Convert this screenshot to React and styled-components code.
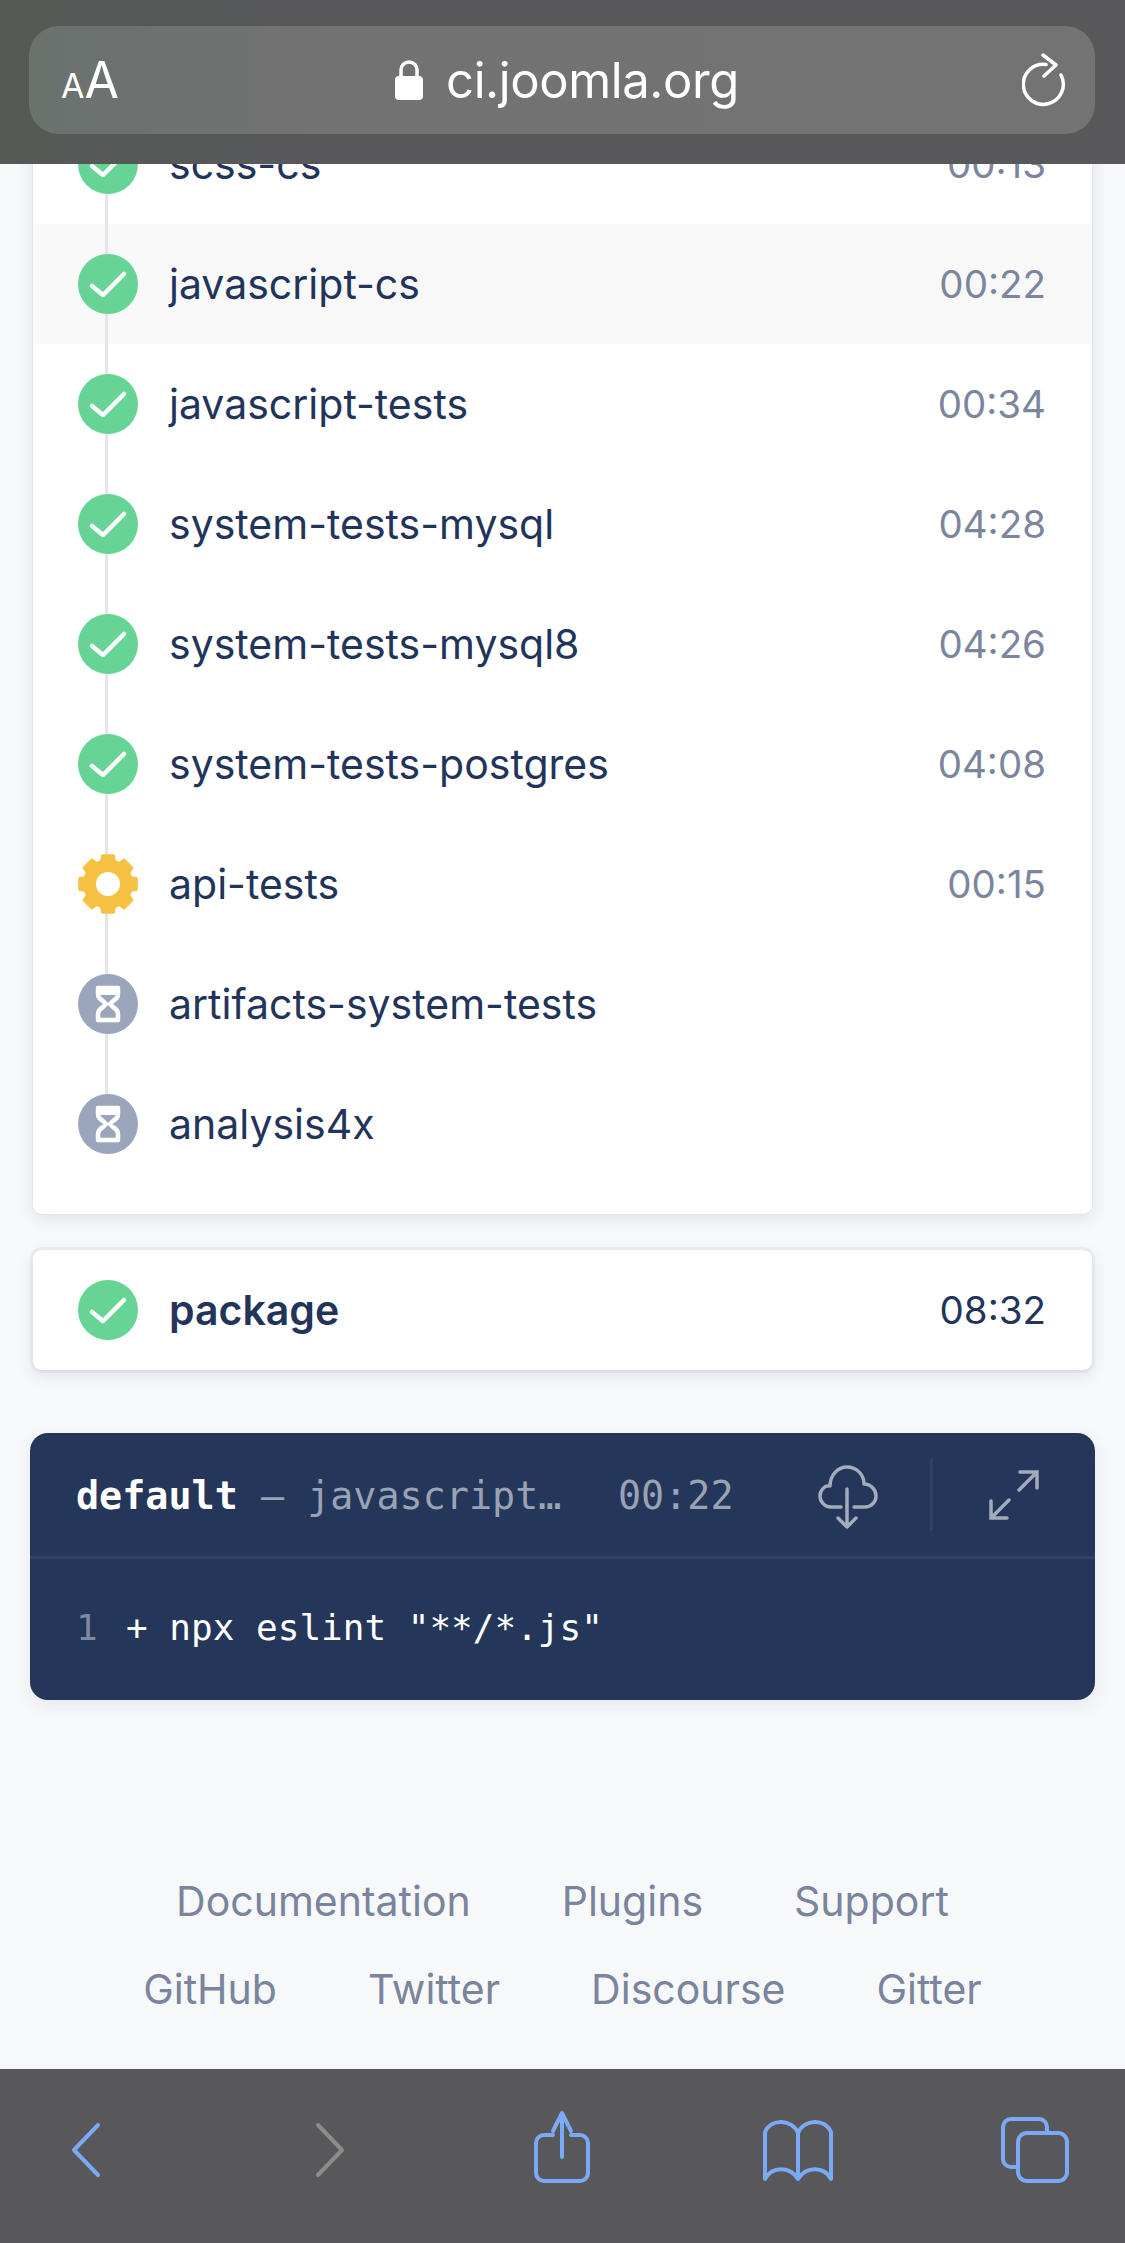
import React from 'react'
import styled, { createGlobalStyle } from 'styled-components'

const GlobalStyle = createGlobalStyle`
  html, body { margin: 0; padding: 0; background: #f6f8fa; }
  body { font-family: Inter, "Noto Sans", sans-serif; }
`

const jobs = [
  { name: 'scss-cs', time: '00:13', status: 'success' },
  { name: 'javascript-cs', time: '00:22', status: 'success', active: true },
  { name: 'javascript-tests', time: '00:34', status: 'success' },
  { name: 'system-tests-mysql', time: '04:28', status: 'success' },
  { name: 'system-tests-mysql8', time: '04:26', status: 'success' },
  { name: 'system-tests-postgres', time: '04:08', status: 'success' },
  { name: 'api-tests', time: '00:15', status: 'running' },
  { name: 'artifacts-system-tests', status: 'pending' },
  { name: 'analysis4x', status: 'pending' },
]

const footerLinks = ['Documentation', 'Plugins', 'Support', 'GitHub', 'Twitter', 'Discourse', 'Gitter']

// 8 tooth gear, centre 30,30
const gearPath = () => {
  const pts = []
  for (let i = 0; i < 8; i++) {
    const a = (i * Math.PI) / 4 - Math.PI / 2
    const p = (r, d) => {
      const t = a + d
      return `${(30 + r * Math.cos(t)).toFixed(2)} ${(30 + r * Math.sin(t)).toFixed(2)}`
    }
    pts.push(p(25, -0.32), p(30.5, -0.22), p(30.5, 0.22), p(25, 0.32))
  }
  return 'M' + pts.join('L') + 'Z'
}

const StatusIcon = ({ status }) => {
  if (status === 'running') {
    return (
      <IconBox viewBox="0 0 60 60">
        <path d={gearPath()} fill="#f6c042" />
        <circle cx="30" cy="30" r="12" fill="#fff" />
      </IconBox>
    )
  }
  if (status === 'pending') {
    return (
      <IconBox viewBox="0 0 60 60">
        <circle cx="30" cy="30" r="30" fill="#9ba6bd" />
        <path d="M20 14H40V20Q40 24 35 27L32 30L35 33Q40 36 40 40V46H20V40Q20 36 25 33L28 30L25 27Q20 24 20 20Z" fill="none" stroke="#fff" strokeWidth="4.5" strokeLinejoin="round" />
        <path d="M21 15H39V21H21Z" fill="#fff" />
      </IconBox>
    )
  }
  return (
    <IconBox viewBox="0 0 60 60">
      <circle cx="30" cy="30" r="30" fill="#65d495" />
      <path d="M14 32L25 41L46 20" fill="none" stroke="#fff" strokeWidth="4.5" strokeLinecap="round" strokeLinejoin="round" />
    </IconBox>
  )
}

const App = () => (
  <Page>
    <GlobalStyle />

    <TopBar>
      <AddressBar>
        <TextSize><small>A</small>A</TextSize>
        <Url>
          <svg width="28" height="40" viewBox="0 0 28 40">
            <path d="M6 18V10a8 8 0 0 1 16 0v8" fill="none" stroke="#fff" strokeWidth="3.5" />
            <rect x="0" y="16" width="28" height="24" rx="4" fill="#fff" />
          </svg>
          ci.joomla.org
        </Url>
        <Reload>
          <svg width="44" height="54" viewBox="0 0 44 54" fill="none" stroke="#fff" strokeWidth="3.5" strokeLinecap="round" strokeLinejoin="round">
            <path d="M39 22A20 20 0 1 1 24 11.5" />
            <path d="M21 2L34 12L22 23" />
          </svg>
        </Reload>
      </AddressBar>
    </TopBar>

    <Card>
      {jobs.map((job, i) => (
        <Row key={job.name} $active={job.active} $last={i === jobs.length - 1}>
          <StatusIcon status={job.status} />
          <JobName>{job.name}</JobName>
          {job.time && <JobTime>{job.time}</JobTime>}
        </Row>
      ))}
      <CardEnd />
    </Card>

    <StageCard>
      <StatusIcon status="success" />
      <StageName>package</StageName>
      <StageTime>08:32</StageTime>
    </StageCard>

    <LogPanel>
      <LogHeader>
        <LogTitle><b>default</b> <span>— javascript…</span></LogTitle>
        <LogTime>00:22</LogTime>
        <LogAction>
          <svg width="60" height="64" viewBox="0 0 60 64" fill="none" stroke="#a3abbd" strokeWidth="3.5" strokeLinecap="round" strokeLinejoin="round">
            <path d="M23 42H13C6 42 2 36 2 31C2 25 7 20 12 21C12 10 20 2 29 2C39 2 46 10 46 19C53 19 58 25 58 31C58 37 53 42 47 42H36" />
            <path d="M29 24V62M20 53L29 62L38 53" />
          </svg>
        </LogAction>
        <LogExpand>
          <svg width="52" height="52" viewBox="0 0 52 52" fill="none" stroke="#a3abbd" strokeWidth="3.5" strokeLinecap="round">
            <path d="M32 3H49V19M49 3L31 21M3 32V49H19M3 49L21 31" />
          </svg>
        </LogExpand>
      </LogHeader>
      <LogBody>
        <LineNumber>1</LineNumber>
        <LogLine>+ npx eslint "**/*.js"</LogLine>
      </LogBody>
    </LogPanel>

    <Footer>
      {footerLinks.map(l => <FooterLink key={l}>{l}</FooterLink>)}
    </Footer>

    <BottomBar>
      <svg viewBox="0 0 72 80" stroke="#7aa9f5">
        <path d="M48 15L24 40L48 65" />
      </svg>
      <svg viewBox="0 0 72 80" stroke="#8c8c8c">
        <path d="M24 15L48 40L24 65" />
      </svg>
      <svg viewBox="0 0 72 80" stroke="#7aa9f5">
        <path d="M27 25H18a8 8 0 0 0-8 8V63a8 8 0 0 0 8 8H54a8 8 0 0 0 8-8V33a8 8 0 0 0-8-8H45" />
        <path d="M36 47V4M27 21L36 3L45 21" />
      </svg>
      <svg viewBox="0 0 72 80" stroke="#7aa9f5">
        <path d="M36 23C30 9 9 8 3 22V69C10 56 28 56 36 69C44 56 62 56 69 69V22C63 8 42 9 36 23V69" />
      </svg>
      <svg viewBox="0 0 72 80" stroke="#7aa9f5">
        <path d="M17 57H12a8 8 0 0 1-8-8V17a8 8 0 0 1 8-8H40a8 8 0 0 1 8 8V22" />
        <rect x="19" y="23" width="49" height="48" rx="9" />
      </svg>
    </BottomBar>
  </Page>
)

const Page = styled.div`
  position: relative;
  height: 2243px;
  overflow: hidden;
  padding-top: 104px;
  box-sizing: border-box;
  background: #f6f8fa;
`

const TopBar = styled.div`
  position: absolute;
  top: 0;
  left: 0;
  right: 0;
  height: 164px;
  z-index: 2;
  padding: 26px 30px 0 29px;
  box-sizing: border-box;
  background: linear-gradient(90deg, #545a56 0%, #58585a 25%, #58585a 100%);
`

const AddressBar = styled.div`
  display: grid;
  grid-template-columns: 1fr auto 1fr;
  align-items: center;
  height: 108px;
  padding: 0 29px 0 32px;
  border-radius: 30px;
  background: linear-gradient(90deg, #6a726e 0%, #727272 25%, #737373 100%);
  color: #fff;
`

const TextSize = styled.div`
  font-size: 50px;
  small { font-size: 34px; }
`

const Url = styled.div`
  display: flex;
  align-items: center;
  gap: 23px;
  padding-left: 7px;
  font-size: 49px;
  letter-spacing: -0.4px;
`

const Reload = styled.div`
  justify-self: end;
  height: 54px;
`

const Card = styled.div`
  margin: 0 33px;
  background: #fff;
  border-radius: 0 0 9px 9px;
  box-shadow: 0 0 0 1px rgba(60, 70, 100, 0.04), 0 5px 16px rgba(60, 70, 100, 0.12);
`

const Row = styled.div`
  position: relative;
  display: flex;
  align-items: center;
  height: 120px;
  padding: 0 46px 0 45px;
  background: ${p => (p.$active ? '#f8f8f9' : 'transparent')};
  &::before {
    content: '';
    position: absolute;
    left: 72px;
    width: 3px;
    top: 0;
    bottom: ${p => (p.$last ? '60px' : '0')};
    background: #e3e5eb;
  }
`

const CardEnd = styled.div`
  height: 30px;
`

const IconBox = styled.svg`
  position: relative;
  flex: none;
  width: 60px;
  height: 60px;
`

const JobName = styled.div`
  flex: 1;
  margin-left: 31px;
  font-size: 41px;
  color: #22345a;
`

const JobTime = styled.div`
  font-size: 38.5px;
  color: #7b869e;
`

const StageCard = styled.div`
  display: flex;
  align-items: center;
  height: 120px;
  margin: 36px 33px 0;
  padding: 0 46px 0 45px;
  background: #fff;
  border-radius: 9px;
  box-shadow: 0 0 0 3px rgba(60, 70, 100, 0.05), 0 5px 16px rgba(60, 70, 100, 0.12);
`

const StageName = styled.div`
  flex: 1;
  margin-left: 31px;
  font-size: 41px;
  font-weight: 600;
  color: #22345a;
`

const StageTime = styled.div`
  font-size: 38.5px;
  color: #22345a;
`

const LogPanel = styled.div`
  margin: 63px 30px 0;
  height: 267px;
  border-radius: 18px;
  background: #243659;
  font-family: "DejaVu Sans Mono", monospace;
  box-shadow: 0 6px 20px rgba(60, 70, 100, 0.08);
`

const LogHeader = styled.div`
  display: flex;
  align-items: center;
  height: 123px;
  padding-left: 46px;
  border-bottom: 3px solid #2f4165;
`

const LogTitle = styled.div`
  width: 499px;
  padding-top: 2px;
  white-space: nowrap;
  font-size: 38.4px;
  color: #9aa3b5;
  b { color: #fff; font-weight: 700; }
`

const LogTime = styled.div`
  margin-left: 43px;
  padding-top: 2px;
  font-size: 38.4px;
  color: #9aa3b5;
`

const LogAction = styled.div`
  display: flex;
  margin-left: 84px;
  padding-top: 4px;
`

const LogExpand = styled.div`
  display: flex;
  align-items: center;
  height: 72px;
  margin-left: 52px;
  padding-left: 55px;
  border-left: 3px solid #2f4165;
`

const LogBody = styled.div`
  display: flex;
  align-items: center;
  height: 136px;
  padding-left: 46px;
  font-size: 36px;
  white-space: pre;
`

const LineNumber = styled.span`
  width: 50px;
  color: #7f899d;
`

const LogLine = styled.span`
  color: #fff;
`

const Footer = styled.div`
  display: flex;
  flex-wrap: wrap;
  justify-content: center;
  column-gap: 91px;
  margin-top: 157px;
  padding: 0 90px;
`

const FooterLink = styled.a`
  line-height: 88px;
  font-size: 41px;
  color: #7a859d;
`

const BottomBar = styled.div`
  position: absolute;
  left: 0;
  right: 0;
  bottom: 0;
  height: 174px;
  z-index: 2;
  display: grid;
  grid-template-columns: 244px 232px 236px 237px 72px;
  padding: 41px 0 0 50px;
  box-sizing: border-box;
  background: #58585a;
  svg {
    width: 72px;
    height: 80px;
    fill: none;
    stroke-width: 4;
    stroke-linecap: round;
    stroke-linejoin: round;
  }
`

export default App
